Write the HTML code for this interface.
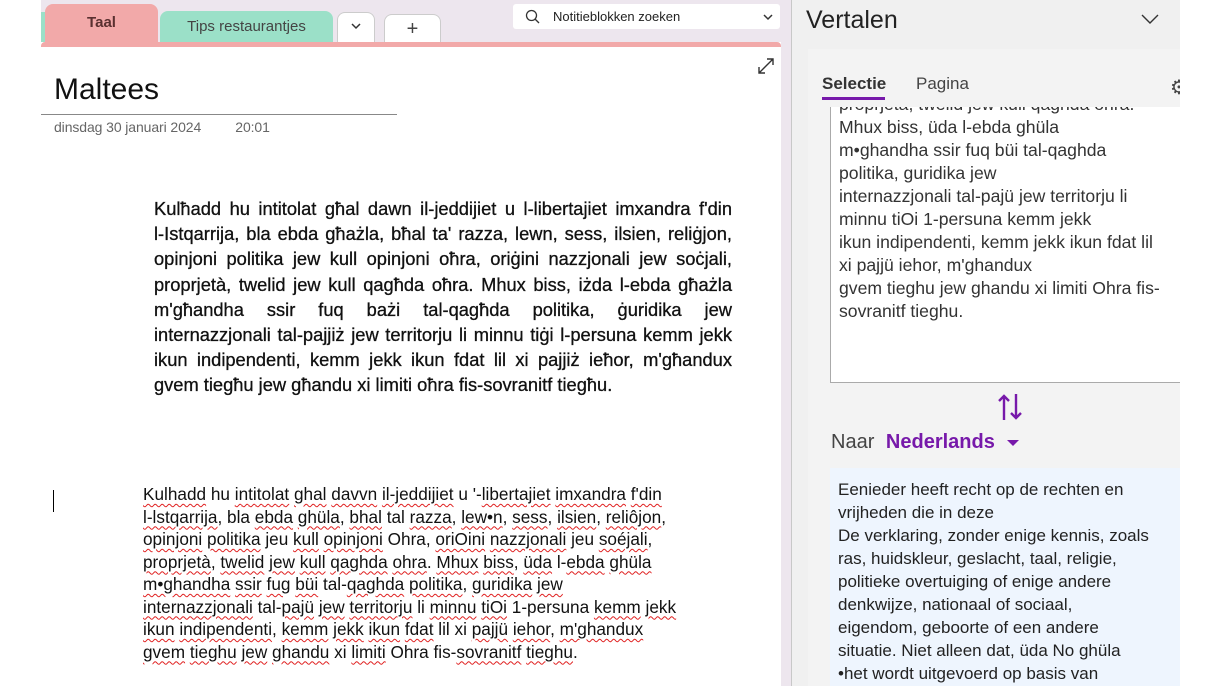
<!DOCTYPE html>
<html><head><meta charset="utf-8"><style>
*{margin:0;padding:0;box-sizing:border-box}
body{width:1220px;height:686px;overflow:hidden;background:#fff;font-family:"Liberation Sans",sans-serif;position:relative}
.abs{position:absolute}
.top{left:41px;top:0;width:740px;height:42px;background:#ede6ee}
.tab{position:absolute;border-radius:8px 8px 0 0;text-align:center;font-size:15px;color:#444}
.pink{left:41px;top:42px;width:740px;height:5px;background:#f2a9a9;border-radius:4px 4px 0 0}
.w{text-decoration:underline wavy #e02020;text-decoration-thickness:1px;text-underline-offset:3px}
.j span{display:block;text-align:justify;text-align-last:justify;white-space:nowrap}
.j span.l{text-align-last:left}
</style></head><body>
<div class="abs top"></div>
<div class="tab" style="left:41px;top:12px;width:4px;height:30px;background:#9be0c8;border-radius:0"></div>
<div class="tab" style="left:45px;top:4px;width:113px;height:38px;background:#f2a9a9;font-weight:bold;color:#5a3030;line-height:38px">Taal</div>
<div class="tab" style="left:160px;top:11px;width:173px;height:31px;background:#9be0c8;line-height:31px">Tips restaurantjes</div>
<div class="tab" style="left:337px;top:12px;width:38px;height:30px;background:#fff;border:1px solid #ccc;border-bottom:none">
<svg style="position:absolute;left:12px;top:10px" width="12" height="8"><path d="M2 1l4 4 4-4" fill="none" stroke="#333" stroke-width="1.5"/></svg></div>
<div class="tab" style="left:384px;top:14px;width:57px;height:28px;background:#fff;border:1px solid #ccc;border-bottom:none;line-height:28px;font-size:20px">+</div>
<div class="abs" style="left:513px;top:4px;width:267px;height:25px;background:#fff;border-radius:3px;font-size:13px;line-height:25px;padding-left:40px;color:#222">Notitieblokken zoeken
<svg class="abs" style="left:12px;top:5px" width="16" height="16"><circle cx="6.5" cy="6.5" r="5" fill="none" stroke="#333" stroke-width="1.3"/><line x1="10" y1="10" x2="14" y2="14" stroke="#333" stroke-width="1.3"/></svg>
<svg class="abs" style="right:6px;top:8px" width="12" height="10"><path d="M2 3l4 4 4-4" fill="none" stroke="#333" stroke-width="1.5"/></svg></div>
<div class="abs pink"></div>
<svg class="abs" style="left:757px;top:57px" width="18" height="18"><path d="M2 16L16 2M10 2h6v6M2 10v6h6" fill="none" stroke="#333" stroke-width="1.4"/></svg>
<div class="abs" style="left:54px;top:73px;font-size:30px;color:#111">Maltees</div>
<div class="abs" style="left:41px;top:114px;width:356px;height:1px;background:#888"></div>
<div class="abs" style="left:54px;top:119px;font-size:14px;color:#666;letter-spacing:-0.1px">dinsdag 30 januari 2024&nbsp;&nbsp;&nbsp;&nbsp;&nbsp;&nbsp;&nbsp;&nbsp;&nbsp;20:01</div>
<div class="abs j" style="left:154px;top:196px;width:578px;font-size:18.3px;line-height:25.2px;color:#111;-webkit-text-stroke:0.3px #111">
<span>Kulħadd hu intitolat għal dawn il-jeddijiet u l-libertajiet imxandra f'din</span>
<span>l-Istqarrija, bla ebda għażla, bħal ta' razza, lewn, sess, ilsien, reliġjon,</span>
<span>opinjoni politika jew kull opinjoni oħra, oriġini nazzjonali jew soċjali,</span>
<span>proprjetà, twelid jew kull qagħda oħra. Mhux biss, iżda l-ebda għażla</span>
<span>m'għandha ssir fuq bażi tal-qagħda politika, ġuridika jew</span>
<span>internazzjonali tal-pajjiż jew territorju li minnu tiġi l-persuna kemm jekk</span>
<span>ikun indipendenti, kemm jekk ikun fdat lil xi pajjiż ieħor, m'għandux</span>
<span class="l">gvem tiegħu jew għandu xi limiti oħra fis-sovranitf tiegħu.</span>
</div>
<div class="abs" style="left:53px;top:490px;width:1px;height:22px;background:#000"></div>
<div class="abs" style="left:143px;top:483px;width:600px;font-size:17.2px;line-height:22.5px;color:#111;white-space:nowrap"><span class="w">Kulhadd</span> hu <span class="w">intitolat</span> <span class="w">ghal</span> <span class="w">davvn</span> <span class="w">il-jeddijiet</span> u '-<span class="w">libertajiet</span> <span class="w">imxandra</span> <span class="w">f'din</span><br><span class="w">l-lstqarrija</span>, bla <span class="w">ebda</span> <span class="w">ghüla</span>, <span class="w">bhal</span> tal <span class="w">razza</span>, <span class="w">lew•n</span>, <span class="w">sess</span>, <span class="w">ilsien</span>, <span class="w">reliôjon</span>,<br><span class="w">opinjoni</span> <span class="w">politika</span> jeu <span class="w">kull</span> <span class="w">opinjoni</span> Ohra, <span class="w">oriOini</span> <span class="w">nazzjonali</span> jeu <span class="w">soéjali</span>,<br><span class="w">proprjetà</span>, <span class="w">twelid</span> <span class="w">jew</span> <span class="w">kull</span> <span class="w">qaghda</span> <span class="w">ohra</span>. <span class="w">Mhux</span> <span class="w">biss</span>, <span class="w">üda</span> l-<span class="w">ebda</span> <span class="w">ghüla</span><br><span class="w">m•ghandha</span> <span class="w">ssir</span> <span class="w">fug</span> <span class="w">büi</span> tal-<span class="w">qaghda</span> <span class="w">politika</span>, <span class="w">guridika</span> <span class="w">jew</span><br><span class="w">internazzjonali</span> tal-<span class="w">pajü</span> <span class="w">jew</span> <span class="w">territorju</span> li <span class="w">minnu</span> <span class="w">tiOi</span> 1-persuna <span class="w">kemm</span> <span class="w">jekk</span><br><span class="w">ikun</span> <span class="w">indipendenti</span>, <span class="w">kemm</span> <span class="w">jekk</span> <span class="w">ikun</span> <span class="w">fdat</span> lil xi <span class="w">pajjü</span> <span class="w">iehor</span>, <span class="w">m'ghandux</span><br><span class="w">gvem</span> <span class="w">tieghu</span> <span class="w">jew</span> <span class="w">ghandu</span> xi <span class="w">limiti</span> Ohra fis-<span class="w">sovranitf</span> <span class="w">tieghu</span>.</div>

<div class="abs" style="left:781px;top:0;width:10px;height:686px;background:#ede6ee"></div>
<div class="abs" style="left:791px;top:0;width:1px;height:686px;background:#c8c8c8"></div>
<div class="abs" style="left:792px;top:0;width:388px;height:686px;background:#f0f0f0"></div>
<div class="abs" style="left:808px;top:49px;width:372px;height:637px;background:#f3f3f3"></div>
<div class="abs" style="left:806px;top:6px;font-size:25px;color:#222">Vertalen</div>
<svg class="abs" style="left:1140px;top:12px" width="20" height="14"><path d="M2 3l8 8 8-8" fill="none" stroke="#333" stroke-width="1.4"/></svg>
<div class="abs" style="left:822px;top:74px;font-size:17px;font-weight:bold;color:#333">Selectie</div>
<div class="abs" style="left:822px;top:97px;width:63px;height:3px;background:#7719aa"></div>
<div class="abs" style="left:916px;top:74px;font-size:17px;color:#444">Pagina</div>
<div class="abs" style="left:1170px;top:78px;font-size:20px;color:#444;line-height:20px;width:10px;overflow:hidden">⚙</div>
<div class="abs" style="left:830px;top:107px;width:350px;height:276px;background:#fff;border-left:1px solid #aaa;border-bottom:1px solid #aaa;overflow:hidden">
<div style="position:absolute;left:8px;top:-14px;width:360px;font-size:17.6px;line-height:23px;color:#333;white-space:nowrap">proprjetà, twelid jew kull qaghda ohra.<br>Mhux biss, üda l-ebda ghüla<br>m•ghandha ssir fuq büi tal-qaghda<br>politika, guridika jew<br>internazzjonali tal-pajü jew territorju li<br>minnu tiOi 1-persuna kemm jekk<br>ikun indipendenti, kemm jekk ikun fdat lil<br>xi pajjü iehor, m'ghandux<br>gvem tieghu jew ghandu xi limiti Ohra fis-<br>sovranitf tieghu.</div></div>
<svg class="abs" style="left:996px;top:392px" width="30" height="30"><path d="M8 28V4M3 9l5-5 5 5M20 2v24M15 21l5 5 5-5" fill="none" stroke="#7719aa" stroke-width="2.4"/></svg>
<div class="abs" style="left:831px;top:431px;font-size:20px;color:#444">Naar <b style="color:#7719aa;margin-left:6px">Nederlands</b></div>
<svg class="abs" style="left:1007px;top:440px" width="12" height="8"><path d="M0 0h12L6 6z" fill="#7719aa"/></svg>
<div class="abs" style="left:830px;top:468px;width:350px;height:218px;background:#eef5fe"></div>
<div class="abs" style="left:838px;top:478px;width:342px;font-size:17px;line-height:23px;color:#222;white-space:nowrap;overflow:hidden">Eenieder heeft recht op de rechten en<br>vrijheden die in deze<br>De verklaring, zonder enige kennis, zoals<br>ras, huidskleur, geslacht, taal, religie,<br>politieke overtuiging of enige andere<br>denkwijze, nationaal of sociaal,<br>eigendom, geboorte of een andere<br>situatie. Niet alleen dat, üda No ghüla<br>•het wordt uitgevoerd op basis van</div>
</body></html>
